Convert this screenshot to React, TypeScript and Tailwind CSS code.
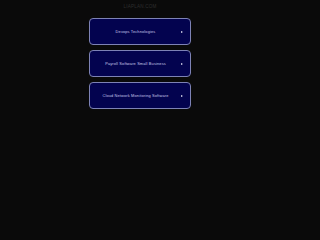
const links = [
  "Devops Technologies",
  "Payroll Software Small Business",
  "Cloud Network Monitoring Software",
];

export default function App() {
  return (
    <div
      className="min-h-screen w-full bg-[#0a0a0a]"
      style={{ fontFamily: '"Liberation Sans", Arial, sans-serif' }}
    >
      <div className="flex h-[202px] w-[280px] flex-col items-center">
        <div className="mt-[4px] h-[5px] text-[4.6px] leading-[5px] tracking-[0.2px] text-[#2e2e2e]">
          LIAPLAN.COM
        </div>
        <div className="mt-[9px] flex w-[102px] flex-col gap-[5px]">
          {links.map((l) => (
            <div
              key={l}
              className="relative flex h-[27px] items-center justify-center rounded-[4px] border border-[#7d82b5] bg-[#03034f]"
            >
              <span className="pr-[9px] text-[3.9px] leading-[4px] tracking-[0.15px] text-[#c9c9ea]">
                {l}
              </span>
              <span className="absolute right-[7px] top-1/2 h-0 w-0 -translate-y-1/2 border-y-[1.6px] border-l-[2.6px] border-y-transparent border-l-[#e6e6f5]" />
            </div>
          ))}
        </div>
      </div>
    </div>
  );
}
